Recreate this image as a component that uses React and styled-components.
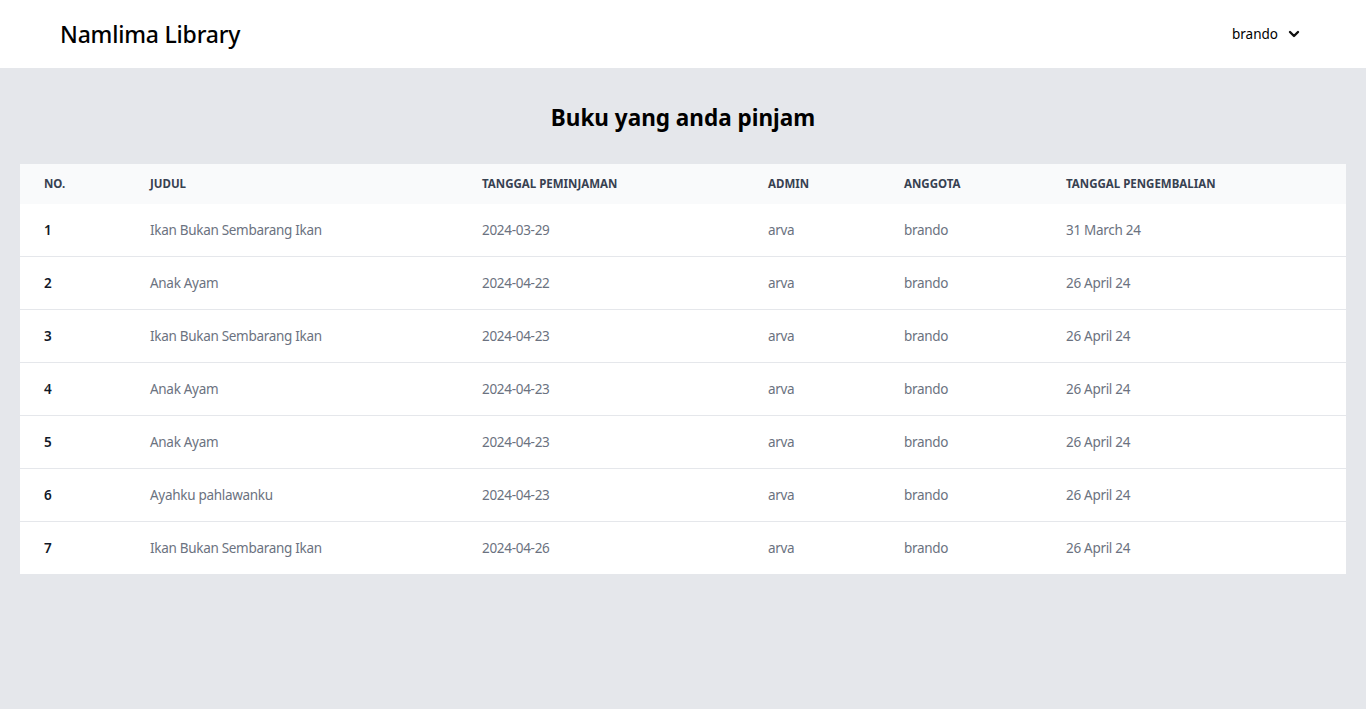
import React from 'react';
import styled, { createGlobalStyle } from 'styled-components';

const GlobalStyle = createGlobalStyle`
  html, body {
    margin: 0;
    padding: 0;
    background-color: #e5e7eb;
    font-family: "Noto Sans", "Open Sans", sans-serif;
  }
  * { box-sizing: border-box; }
`;

const Navbar = styled.nav`
  height: 68px;
  background-color: #ffffff;
  display: flex;
  align-items: center;
  justify-content: space-between;
  padding: 0 66px 0 60px;
`;

const Brand = styled.div`
  font-size: 23px;
  font-weight: 500;
  color: #000000;
  letter-spacing: -0.2px;
`;

const UserMenu = styled.button`
  display: flex;
  align-items: center;
  gap: 10px;
  background: none;
  border: none;
  padding: 0;
  font-family: inherit;
  font-size: 13.5px;
  color: #000000;
  cursor: pointer;
`;

const Main = styled.main`
  padding: 34px 20px 0;
`;

const Heading = styled.h1`
  margin: 0 0 30px;
  text-align: center;
  font-size: 22.5px;
  line-height: 32px;
  font-weight: 700;
  color: #000000;
`;

const Table = styled.table`
  width: 100%;
  border-collapse: collapse;
  background-color: #ffffff;
  font-size: 13.5px;
`;

const HeadCell = styled.th`
  padding: 12px 24px;
  line-height: 16px;
  text-align: left;
  font-size: 11.5px;
  font-weight: 700;
  text-transform: uppercase;
  color: #374151;
  background-color: #f9fafb;
  width: ${p => p.$w}px;
`;

const Row = styled.tr`
  border-bottom: ${p => (p.$last ? 'none' : '1px solid #e5e7eb')};
`;

const Cell = styled.td`
  padding: 16px 24px;
  line-height: 20px;
  letter-spacing: -0.3px;
  color: ${p => (p.$strong ? '#111827' : '#6b7280')};
  font-weight: ${p => (p.$strong ? 600 : 400)};
`;

const Chevron = () => (
  <svg width="12" height="12" viewBox="0 0 12 12" fill="none">
    <polyline points="2,4 6,8 10,4" stroke="#111" strokeWidth="2.4" strokeLinecap="round" strokeLinejoin="round" />
  </svg>
);

const columns = [
  { label: 'No.', w: 106 },
  { label: 'Judul', w: 332 },
  { label: 'Tanggal Peminjaman', w: 286 },
  { label: 'Admin', w: 136 },
  { label: 'Anggota', w: 162 },
  { label: 'Tanggal Pengembalian', w: 304 },
];

const loans = [
  { judul: 'Ikan Bukan Sembarang Ikan', pinjam: '2024-03-29', kembali: '31 March 24' },
  { judul: 'Anak Ayam', pinjam: '2024-04-22', kembali: '26 April 24' },
  { judul: 'Ikan Bukan Sembarang Ikan', pinjam: '2024-04-23', kembali: '26 April 24' },
  { judul: 'Anak Ayam', pinjam: '2024-04-23', kembali: '26 April 24' },
  { judul: 'Anak Ayam', pinjam: '2024-04-23', kembali: '26 April 24' },
  { judul: 'Ayahku pahlawanku', pinjam: '2024-04-23', kembali: '26 April 24' },
  { judul: 'Ikan Bukan Sembarang Ikan', pinjam: '2024-04-26', kembali: '26 April 24' },
];

function App() {
  return (
    <>
      <GlobalStyle />
      <Navbar>
        <Brand>Namlima Library</Brand>
        <UserMenu>
          brando
          <Chevron />
        </UserMenu>
      </Navbar>
      <Main>
        <Heading>Buku yang anda pinjam</Heading>
        <Table>
          <thead>
            <tr>
              {columns.map(c => (
                <HeadCell key={c.label} $w={c.w}>{c.label}</HeadCell>
              ))}
            </tr>
          </thead>
          <tbody>
            {loans.map((l, i) => (
              <Row key={i} $last={i === loans.length - 1}>
                <Cell $strong>{i + 1}</Cell>
                <Cell>{l.judul}</Cell>
                <Cell>{l.pinjam}</Cell>
                <Cell>arva</Cell>
                <Cell>brando</Cell>
                <Cell>{l.kembali}</Cell>
              </Row>
            ))}
          </tbody>
        </Table>
      </Main>
    </>
  );
}

export default App;
